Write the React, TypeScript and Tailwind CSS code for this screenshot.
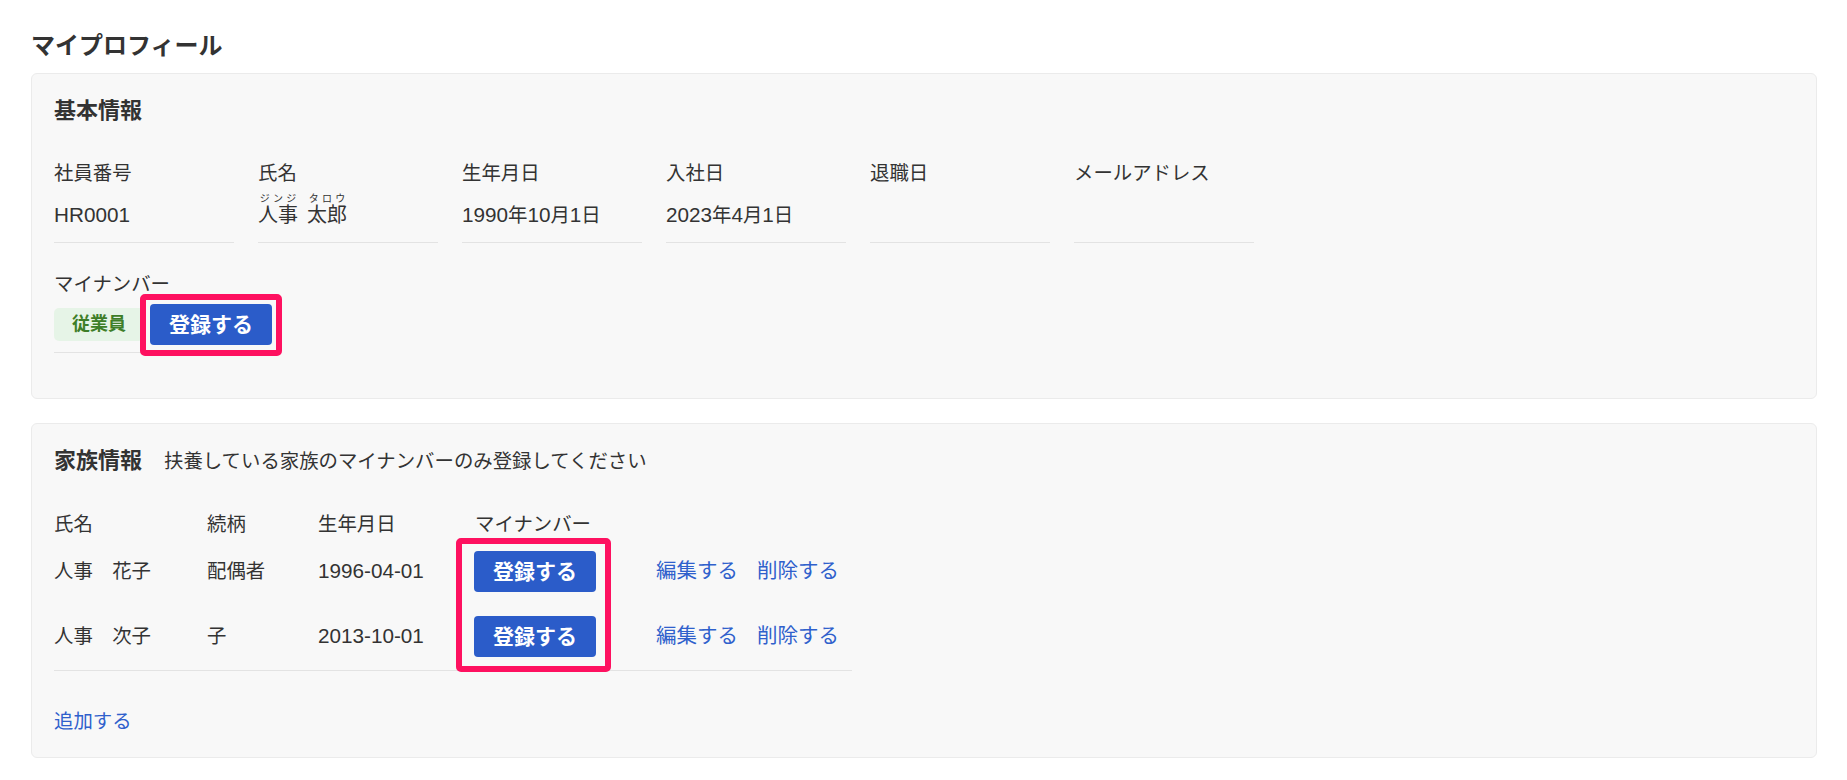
import React from "react";

const FONT = "font-['Liberation_Sans','Noto_Sans_CJK_JP',sans-serif]";

// latin runs render a little larger than the kana/kanji around them
function L({ children }: { children: React.ReactNode }) {
  return <span className="text-[20.7px]">{children}</span>;
}

function Field({ label, children }: { label: string; children?: React.ReactNode }) {
  return (
    <div className="flex flex-col border-b border-[#e3e3e3] pb-3">
      <div className="h-[30px] leading-[30px]">{label}</div>
      <div className="mt-3 h-[30px] leading-[30px] whitespace-nowrap">{children}</div>
    </div>
  );
}

function Ruby({ base, reading, className = "" }: { base: string; reading: string; className?: string }) {
  return (
    <span className={`relative inline-block text-[20px] ${className}`}>
      {base}
      <span className="absolute left-0 right-0 -top-[6px] flex justify-around text-[10px] leading-none">
        {reading.split("").map((c, i) => (
          <span key={i}>{c}</span>
        ))}
      </span>
    </span>
  );
}

function RegisterButton() {
  return (
    <button className="h-[41px] w-[122px] shrink-0 rounded-[4px] bg-[#2b5cc9] text-[21px] font-bold leading-none text-white">
      登録する
    </button>
  );
}

const FAMILY = [
  { name: "人事　花子", relation: "配偶者", birth: "1996-04-01" },
  { name: "人事　次子", relation: "子", birth: "2013-10-01" },
];

export default function App() {
  return (
    <div className={`${FONT} min-h-screen bg-white pl-[31px] pr-[30px] pt-[28px] text-[19.4px] text-[#333333]`}>
      <h1 className="mb-[9px] h-[36px] text-[24px] font-bold leading-[36px]">マイプロフィール</h1>

      {/* 基本情報 */}
      <section className="rounded-md border border-[#ebebeb] bg-[#f8f8f8] px-[22px] pb-[45px] pt-5">
        <h2 className="h-[33px] text-[22px] font-bold leading-[33px]">基本情報</h2>

        <div className="mt-[31px] grid grid-cols-[repeat(6,180px)] gap-x-6">
          <Field label="社員番号">
            <L>HR0001</L>
          </Field>
          <Field label="氏名">
            <Ruby base="人事" reading="ジンジ" />
            <Ruby base="太郎" reading="タロウ" className="ml-[9px]" />
          </Field>
          <Field label="生年月日">
            <L>1990</L>年<L>10</L>月<L>1</L>日
          </Field>
          <Field label="入社日">
            <L>2023</L>年<L>4</L>月<L>1</L>日
          </Field>
          <Field label="退職日" />
          <Field label="メールアドレス" />
        </div>

        <div className="mt-[26px] w-[180px] border-b border-[#e3e3e3] pb-[6px]">
          <div className="h-[30px] leading-[30px]">マイナンバー</div>
          <div className="mt-[3px] flex h-[44px] items-center gap-[6px]">
            <span className="flex h-[33px] shrink-0 items-center whitespace-nowrap rounded-[5px] bg-[#e6f4e7] px-[18px] text-[18px] font-semibold text-[#3e7e28]">
              従業員
            </span>
            <span className="relative shrink-0">
              <RegisterButton />
              <span className="pointer-events-none absolute -bottom-[11px] -left-[10px] -right-[10px] -top-[10px] rounded-[5px] border-[6px] border-[#fe1160]" />
            </span>
          </div>
        </div>
      </section>

      {/* 家族情報 */}
      <section className="mt-6 rounded-md border border-[#ebebeb] bg-[#f8f8f8] px-[22px] pb-[21px] pt-5">
        <div className="flex h-[33px] items-baseline">
          <h2 className="text-[22px] font-bold leading-[33px]">家族情報</h2>
          <p className="ml-[22px] leading-[33px]">扶養している家族のマイナンバーのみ登録してください</p>
        </div>

        <div className="relative mt-[32px] w-[798px] border-b border-[#e3e3e3]">
          <div className="grid h-[31px] grid-cols-[153px_111px_156px_182px_1fr] leading-[30px]">
            <span>氏名</span>
            <span>続柄</span>
            <span>生年月日</span>
            <span className="pl-[1px]">マイナンバー</span>
            <span />
          </div>
          {FAMILY.map((f) => (
            <div key={f.name} className="grid h-[65px] grid-cols-[153px_111px_156px_182px_1fr] items-center pb-[3px] leading-[30px]">
              <span>{f.name}</span>
              <span>{f.relation}</span>
              <span>
                <L>{f.birth}</L>
              </span>
              <span>
                <RegisterButton />
              </span>
              <span className="flex gap-[19px] text-[20.5px] text-[#2f60cc]">
                <a href="#">編集する</a>
                <a href="#">削除する</a>
              </span>
            </div>
          ))}
          <span className="pointer-events-none absolute left-[402px] top-[29px] h-[134px] w-[155px] rounded-[5px] border-[6px] border-[#fe1160]" />
        </div>

        <a href="#" className="mt-[35px] block h-[30px] leading-[30px] text-[#2f60cc]">
          追加する
        </a>
      </section>
    </div>
  );
}
